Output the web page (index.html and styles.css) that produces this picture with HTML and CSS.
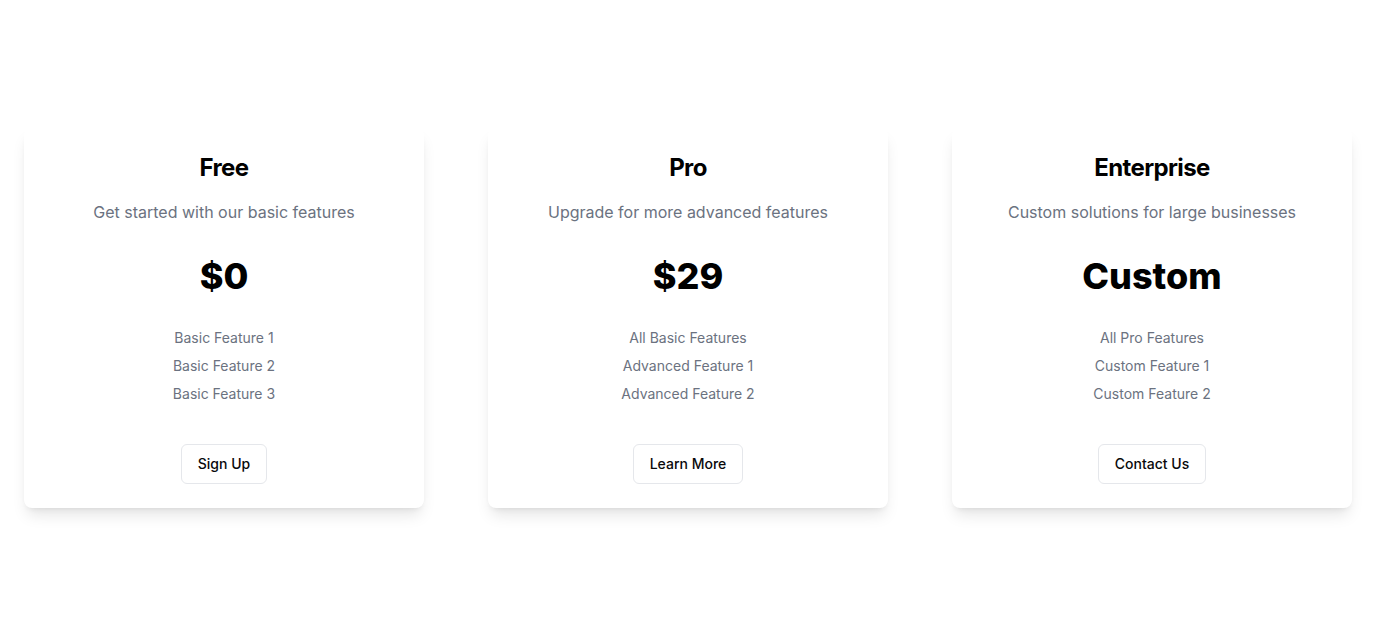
FILE: index.html
```html
<!DOCTYPE html>
<html lang="en">
<head>
<meta charset="utf-8">
<title>Pricing</title>
<link rel="stylesheet" href="styles.css">
</head>
<body>
<main class="page">
  <section class="plans">
    <article class="card">
      <h2 class="title">Free</h2>
      <p class="desc">Get started with our basic features</p>
      <div class="price">$0</div>
      <ul class="features">
        <li>Basic Feature 1</li>
        <li>Basic Feature 2</li>
        <li>Basic Feature 3</li>
      </ul>
      <div class="actions"><button class="btn">Sign Up</button></div>
    </article>
    <article class="card">
      <h2 class="title">Pro</h2>
      <p class="desc">Upgrade for more advanced features</p>
      <div class="price">$29</div>
      <ul class="features">
        <li>All Basic Features</li>
        <li>Advanced Feature 1</li>
        <li>Advanced Feature 2</li>
      </ul>
      <div class="actions"><button class="btn">Learn More</button></div>
    </article>
    <article class="card">
      <h2 class="title">Enterprise</h2>
      <p class="desc">Custom solutions for large businesses</p>
      <div class="price">Custom</div>
      <ul class="features">
        <li>All Pro Features</li>
        <li>Custom Feature 1</li>
        <li>Custom Feature 2</li>
      </ul>
      <div class="actions"><button class="btn">Contact Us</button></div>
    </article>
  </section>
</main>
</body>
</html>
```

FILE: styles.css
```css
* { box-sizing: border-box; }
html, body { margin: 0; padding: 0; background: #ffffff; }
body {
  font-family: Inter, "Noto Sans", "Liberation Sans", sans-serif;
  color: #030712;
}
.page {
  min-height: 100vh;
  display: flex;
  align-items: center;
  justify-content: center;
  padding: 0 24px;
}
.plans {
  width: 100%;
  display: grid;
  grid-template-columns: repeat(3, 1fr);
  gap: 64px;
}
.card {
  background: #ffffff;
  border-radius: 8px;
  padding: 24px;
  text-align: center;
  box-shadow: 0 10px 15px -3px rgba(0,0,0,0.1), 0 4px 6px -4px rgba(0,0,0,0.1);
}
.title {
  margin: 0;
  font-size: 24px;
  line-height: 32px;
  font-weight: 700;
  letter-spacing: -0.025em;
  color: #000;
}
.desc {
  margin: 16px 0 0;
  font-size: 16px;
  line-height: 24px;
  color: #6b7280;
}
.price {
  margin-top: 32px;
  font-size: 36px;
  line-height: 40px;
  font-weight: 800;
  color: #000;
}
.features {
  list-style: none;
  margin: 32px 0 0;
  padding: 0;
  display: flex;
  flex-direction: column;
  gap: 8px;
  font-size: 14px;
  line-height: 20px;
  color: #6b7280;
}
.actions {
  margin-top: 40px;
  display: flex;
  justify-content: center;
}
.btn {
  height: 40px;
  padding: 0 16px;
  border: 1px solid #e5e7eb;
  border-radius: 6px;
  background: #ffffff;
  font-family: inherit;
  font-size: 14px;
  line-height: 20px;
  font-weight: 500;
  color: #09090b;
  cursor: pointer;
}
```
